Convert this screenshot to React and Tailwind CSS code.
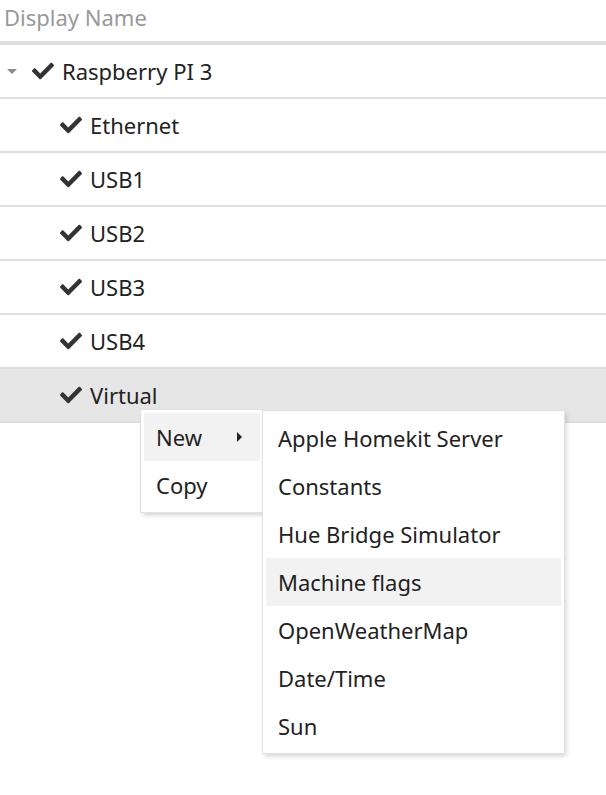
import { FaCheck } from "react-icons/fa";

const children = ["Ethernet", "USB1", "USB2", "USB3", "USB4", "Virtual"];
const submenu = [
  "Apple Homekit Server",
  "Constants",
  "Hue Bridge Simulator",
  "Machine flags",
  "OpenWeatherMap",
  "Date/Time",
  "Sun",
];

const Row = ({ label, depth, active, caret }) => (
  <div
    className={`flex items-center h-[54px] border-b-2 border-[#dedede] ${
      active ? "bg-[#e6e6e6]" : ""
    }`}
  >
    <div className={depth ? "w-[60px]" : "w-[32px] pl-[7px] flex items-center"}>
      {caret && (
        <span className="block w-0 h-0 border-l-[5px] border-r-[5px] border-t-[5px] border-l-transparent border-r-transparent border-t-[#8a8a8a]" />
      )}
    </div>
    <FaCheck className="text-[#333] w-[22px] h-[22px]" />
    <span className="ml-[8px] text-[22px] text-[#222]">{label}</span>
  </div>
);

const App = () => {
  return (
    <div
      className="relative w-[606px] h-[795px] bg-white"
      style={{ fontFamily: '"Noto Sans", "Open Sans", sans-serif' }}
    >
      <div className="h-[45px] pl-[4px] pt-[1px] text-[22px] text-[#999] border-b-4 border-[#dddddd]">
        Display Name
      </div>
      <Row label="Raspberry PI 3" depth={0} caret />
      {children.map((c) => (
        <Row key={c} label={c} depth={1} active={c === "Virtual"} />
      ))}

      <div className="absolute left-[141px] top-[410px] w-[122px] bg-white border-[3px] border-white outline outline-1 outline-[#e2e2e2] shadow-[2px_3px_5px_rgba(0,0,0,0.18)] text-[22px] text-[#222]">
        <div className="h-[48px] flex items-center pl-[12px] pr-[18px] bg-[#f2f2f2]">
          <span className="flex-1">New</span>
          <span className="block w-0 h-0 border-t-[5px] border-b-[5px] border-l-[5px] border-t-transparent border-b-transparent border-l-[#222]" />
        </div>
        <div className="h-[48px] flex items-center pl-[12px]">Copy</div>
      </div>

      <div className="absolute left-[263px] top-[411px] w-[301px] bg-white border-[3px] border-white outline outline-1 outline-[#e2e2e2] shadow-[2px_3px_5px_rgba(0,0,0,0.18)] text-[22px] text-[#222]">
        {submenu.map((s) => (
          <div
            key={s}
            className={`h-[48px] flex items-center pl-[12px] ${
              s === "Machine flags" ? "bg-[#f2f2f2]" : ""
            }`}
          >
            {s}
          </div>
        ))}
      </div>
    </div>
  );
};

export default App;
